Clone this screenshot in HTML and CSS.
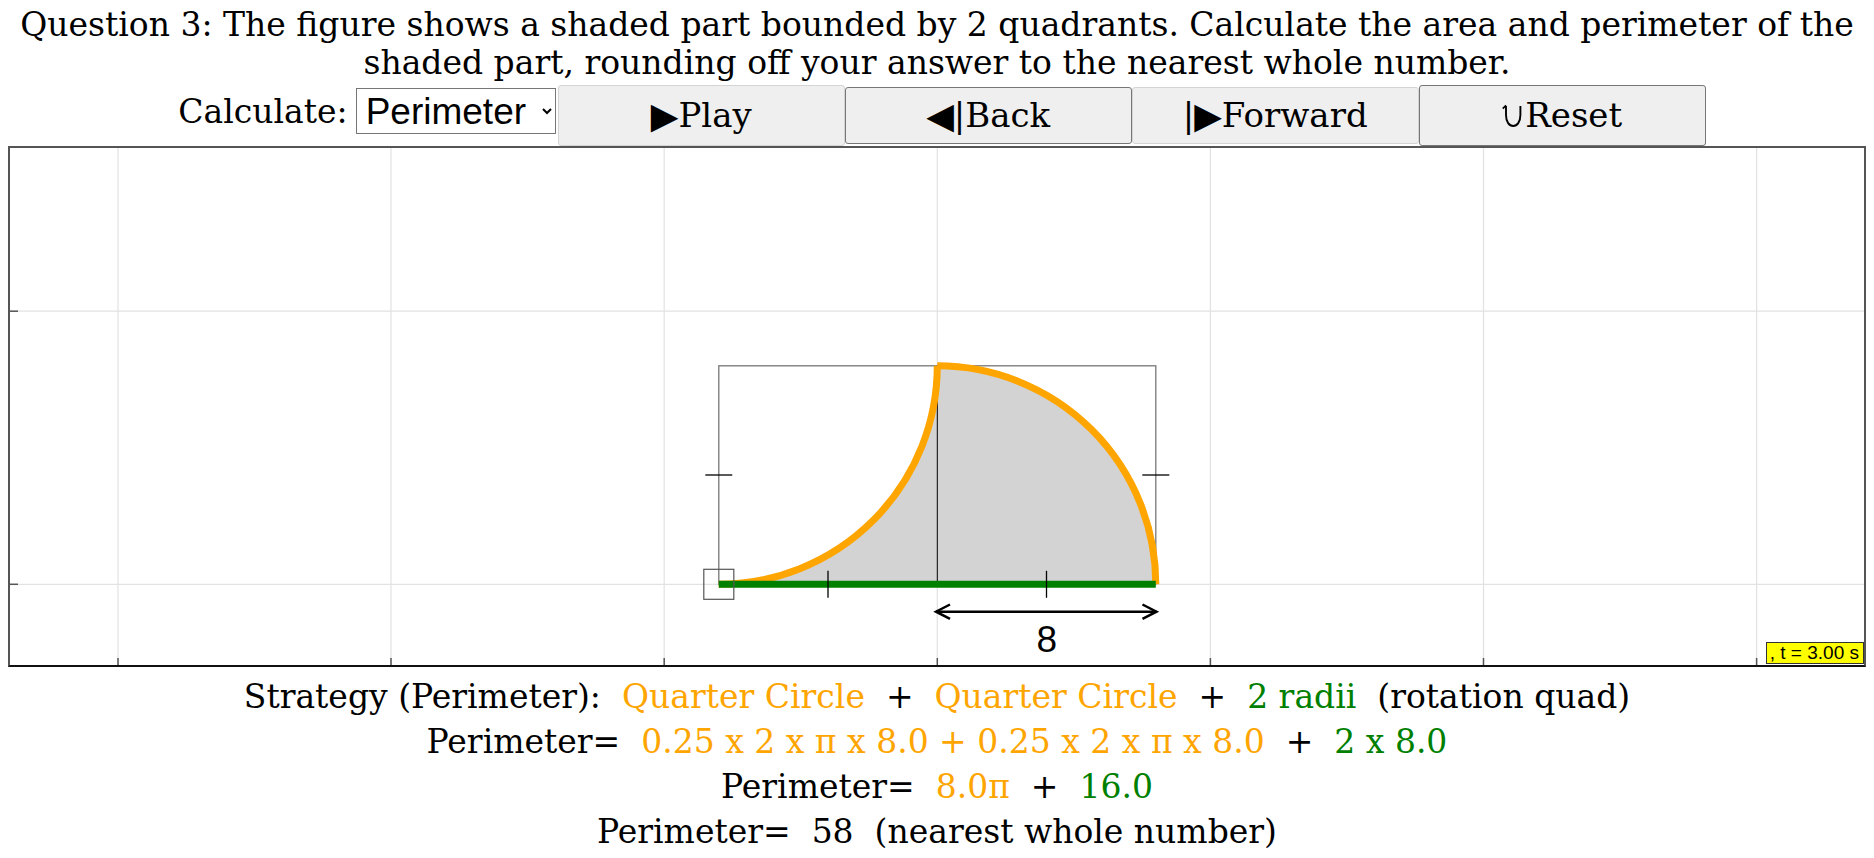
FILE: index.html
```html
<!DOCTYPE html>
<html lang="en">
<head>
<meta charset="utf-8">
<title>Question 3</title>
<link rel="stylesheet" href="styles.css">
</head>
<body>
<div class="page">
  <div class="question">Question 3: The figure shows a shaded part bounded by 2 quadrants. Calculate the area and perimeter of the shaded part, rounding off your answer to the nearest whole number.</div>

  <div class="controls">
    <label class="calc-label" for="calc">Calculate:</label>
    <select id="calc" class="calc-select">
      <option>Area</option>
      <option selected>Perimeter</option>
    </select>
    <button class="btn btn-tall btn-light"><span class="sym">▶</span>Play</button>
    <button class="btn btn-dark"><span class="sym">◀</span>|Back</button>
    <button class="btn btn-light">|<span class="sym">▶</span>Forward</button>
    <button class="btn btn-tall btn-dark"><svg class="reset-icon" width="22" height="28" viewBox="0 0 22 28"><path d="M4 5 L4 14 C4 21 7.3 25 11.2 25 C15.1 25 18.4 21 18.4 14 L18.4 5" fill="none" stroke="#000" stroke-width="1.9"/><path d="M0.8 7.6 L4 4.4" fill="none" stroke="#000" stroke-width="1.7"/></svg>Reset</button>
  </div>

  <div class="plot">
    <svg class="plot-svg" width="1854" height="517" viewBox="0 0 1854 517">
      <g stroke="#e2e2e2" stroke-width="1.2">
        <line x1="108" y1="0" x2="108" y2="517"/>
        <line x1="381" y1="0" x2="381" y2="517"/>
        <line x1="654.2" y1="0" x2="654.2" y2="517"/>
        <line x1="927.3" y1="0" x2="927.3" y2="517"/>
        <line x1="1200.4" y1="0" x2="1200.4" y2="517"/>
        <line x1="1473.5" y1="0" x2="1473.5" y2="517"/>
        <line x1="1746.6" y1="0" x2="1746.6" y2="517"/>
        <line x1="0" y1="163.2" x2="1854" y2="163.2"/>
        <line x1="0" y1="436.3" x2="1854" y2="436.3"/>
      </g>
      <g stroke="#555" stroke-width="1.5">
        <line x1="108" y1="510" x2="108" y2="517"/>
        <line x1="381" y1="510" x2="381" y2="517"/>
        <line x1="654.2" y1="510" x2="654.2" y2="517"/>
        <line x1="927.3" y1="510" x2="927.3" y2="517"/>
        <line x1="1200.4" y1="510" x2="1200.4" y2="517"/>
        <line x1="1473.5" y1="510" x2="1473.5" y2="517"/>
        <line x1="1746.6" y1="510" x2="1746.6" y2="517"/>
        <line x1="0" y1="163.2" x2="8" y2="163.2"/>
        <line x1="0" y1="436.3" x2="8" y2="436.3"/>
      </g>
      <path d="M708.8 436.3 A218.5 218.5 0 0 0 927.3 217.8 A218.5 218.5 0 0 1 1145.8 436.3 Z" fill="#d3d3d3"/>
      <rect x="708.8" y="217.8" width="437" height="218.5" fill="none" stroke="#777" stroke-width="1.3"/>
      <line x1="927.3" y1="217.8" x2="927.3" y2="436.3" stroke="#000" stroke-width="1"/>
      <path d="M708.8 436.3 A218.5 218.5 0 0 0 927.3 217.8" fill="none" stroke="#ffa500" stroke-width="7"/>
      <path d="M927.3 217.8 A218.5 218.5 0 0 1 1145.8 436.3" fill="none" stroke="#ffa500" stroke-width="7"/>
      <line x1="708.8" y1="436.3" x2="1145.8" y2="436.3" stroke="#008000" stroke-width="7"/>
      <rect x="693.8" y="421.3" width="30" height="30" fill="none" stroke="#555" stroke-width="1.2"/>
      <g stroke="#000" stroke-width="1.3">
        <line x1="695.3" y1="327" x2="722.3" y2="327"/>
        <line x1="1132.3" y1="327" x2="1159.3" y2="327"/>
        <line x1="818" y1="422.8" x2="818" y2="449.8"/>
        <line x1="1036.5" y1="422.8" x2="1036.5" y2="449.8"/>
      </g>
      <g stroke="#000" stroke-width="2.5" fill="none">
        <line x1="926" y1="463.7" x2="1146.5" y2="463.7"/>
        <polyline points="940,456.5 926,463.7 940,470.9"/>
        <polyline points="1132.5,456.5 1146.5,463.7 1132.5,470.9"/>
      </g>
      <text x="1036.7" y="504" text-anchor="middle" class="dim-label">8</text>
    </svg>
    <div class="time-badge">, t = 3.00 s</div>
  </div>

  <div class="result">
    <div class="line">Strategy (Perimeter):&nbsp; <span class="orange">Quarter Circle</span>&nbsp; +&nbsp; <span class="orange">Quarter Circle</span>&nbsp; +&nbsp; <span class="green">2 radii</span>&nbsp; (rotation quad)</div>
    <div class="line">Perimeter=&nbsp; <span class="orange">0.25 x 2 x π x 8.0 + 0.25 x 2 x π x 8.0</span>&nbsp; +&nbsp; <span class="green">2 x 8.0</span></div>
    <div class="line">Perimeter=&nbsp; <span class="orange">8.0π</span>&nbsp; +&nbsp; <span class="green">16.0</span></div>
    <div class="line">Perimeter=&nbsp; 58&nbsp; (nearest whole number)</div>
  </div>
</div>
</body>
</html>
```

FILE: styles.css
```css
html, body {
  margin: 0;
  padding: 0;
  background: #fff;
}

body {
  font-family: "DejaVu Serif", "Liberation Serif", serif;
  color: #000;
}

.page {
  padding: 6px 8px 0;
}

.question {
  text-align: center;
  font-size: 33px;
  line-height: 38px;
}

.controls {
  display: flex;
  justify-content: center;
  align-items: center;
  height: 64px;
  padding-left: 10px;
}

.calc-label {
  font-size: 33px;
  line-height: 38px;
  margin-right: 8px;
  padding-bottom: 4px;
}

.calc-select {
  font-family: "Liberation Sans", Arial, sans-serif;
  font-size: 37px;
  width: 200px;
  height: 46px;
  margin: 0 2px 6px 0;
  padding: 0 6px 0 5px;
  color: #000;
  background: #fff;
  border: 1px solid #767676;
  border-radius: 0;
}

.btn {
  display: flex;
  align-items: center;
  justify-content: center;
  width: 287px;
  height: 57px;
  margin: 2px 0 0;
  padding: 0;
  font-family: "DejaVu Serif", serif;
  font-size: 34px;
  color: #000;
  background: #efefef;
  border: 1px solid #767676;
  border-radius: 3px;
}

.btn-tall {
  height: 61px;
}

.btn-light {
  border-color: #d4d4d4;
}

.btn-dark {
  border-color: #767676;
}

.sym {
  font-family: "DejaVu Sans", sans-serif;
  font-size: 36px;
}

.reset-icon {
  display: block;
  margin-right: 1px;
}

.plot {
  position: relative;
  height: 517px;
  border: 2px solid #555;
  border-bottom-color: #111;
}

.plot-svg {
  display: block;
}

.dim-label {
  font-family: "Liberation Sans", Arial, sans-serif;
  font-size: 37px;
  fill: #000;
}

.time-badge {
  position: absolute;
  right: 0;
  bottom: 1px;
  background: #ffff00;
  border: 1px solid #333;
  font-family: "Liberation Sans", Arial, sans-serif;
  font-size: 19px;
  line-height: 20px;
  padding: 0 4px 0 3px;
  color: #000;
}

.result {
  margin-top: 7px;
  text-align: center;
  font-size: 33px;
  line-height: 45px;
}

.orange {
  color: #ffa500;
}

.green {
  color: #008000;
}
```
